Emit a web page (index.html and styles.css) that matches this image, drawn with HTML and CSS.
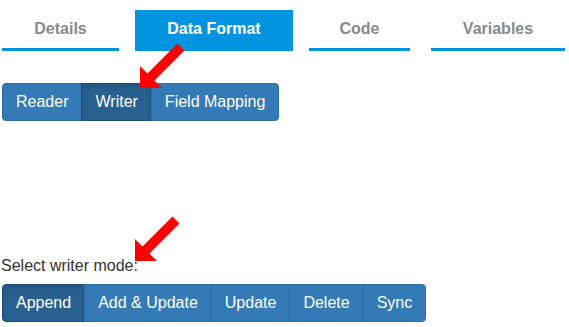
FILE: index.html
```html
<!DOCTYPE html>
<html lang="en">
<head>
  <meta charset="UTF-8">
  <title>Data Format</title>
  <link rel="stylesheet" href="styles.css">
</head>
<body>
  <div class="tabs">
    <div class="tab">Details</div>
    <div class="tab active">Data Format</div>
    <div class="tab">Code</div>
    <div class="tab">Variables</div>
  </div>

  <div class="btn-group format-group">
    <button class="btn">Reader</button>
    <button class="btn active">Writer</button>
    <button class="btn">Field Mapping</button>
  </div>

  <div class="mode">
    <div class="mode-label">Select writer mode:</div>
    <div class="btn-group">
      <button class="btn active">Append</button>
      <button class="btn">Add &amp; Update</button>
      <button class="btn">Update</button>
      <button class="btn">Delete</button>
      <button class="btn">Sync</button>
    </div>
  </div>

  <!-- callout arrows drawn over the page -->
  <svg class="arrows" width="569" height="327" viewBox="0 0 569 327">
    <polygon fill="#f00" points="140,88 140,66 147.5,73.5 177.5,43.5 184.5,50.5 154.5,80.5 162,88"/>
    <polygon fill="#f00" points="135,261 135,239 142.5,246.5 172.5,216.5 179.5,223.5 149.5,253.5 157,261"/>
  </svg>
</body>
</html>
```

FILE: styles.css
```css
body { margin: 0; font-family: "Liberation Sans", Arial, sans-serif; background: #fff; position: relative; width: 569px; height: 327px; overflow: hidden; }
.tabs { display: grid; grid-template-columns: 117px 158px 101px 139px; column-gap: 16px; padding: 10px 2px 0; }
.tab { height: 41px; box-sizing: border-box; display: flex; align-items: center; justify-content: center; font-size: 16px; font-weight: bold; color: #8a8a8a; border-bottom: 3px solid #0394df; }
.tab:last-child { margin-left: 5px; }
.tab.active { background: #0394df; color: #fff; }
.btn-group { display: inline-flex; margin-left: 2px; }
.format-group { margin-top: 32px; }
.btn { font-family: inherit; font-size: 16px; line-height: 24px; padding: 6px 13px; color: #fff; background: #337ab7; border: 1px solid #2e6da4; margin: 0 0 0 -1px; border-radius: 0; cursor: pointer; }
.btn:first-child { margin-left: 0; border-radius: 4px 0 0 4px; }
.btn:last-child { border-radius: 0 4px 4px 0; }
.btn.active { background: #286090; border-color: #204d74; box-shadow: inset 0 3px 5px rgba(0,0,0,0.125); }
.mode { margin-top: 136px; }
.mode-label { font-size: 16px; line-height: 18px; color: #333; margin: 0 0 9px 1px; }
.arrows { position: absolute; left: 0; top: 0; pointer-events: none; }
```
